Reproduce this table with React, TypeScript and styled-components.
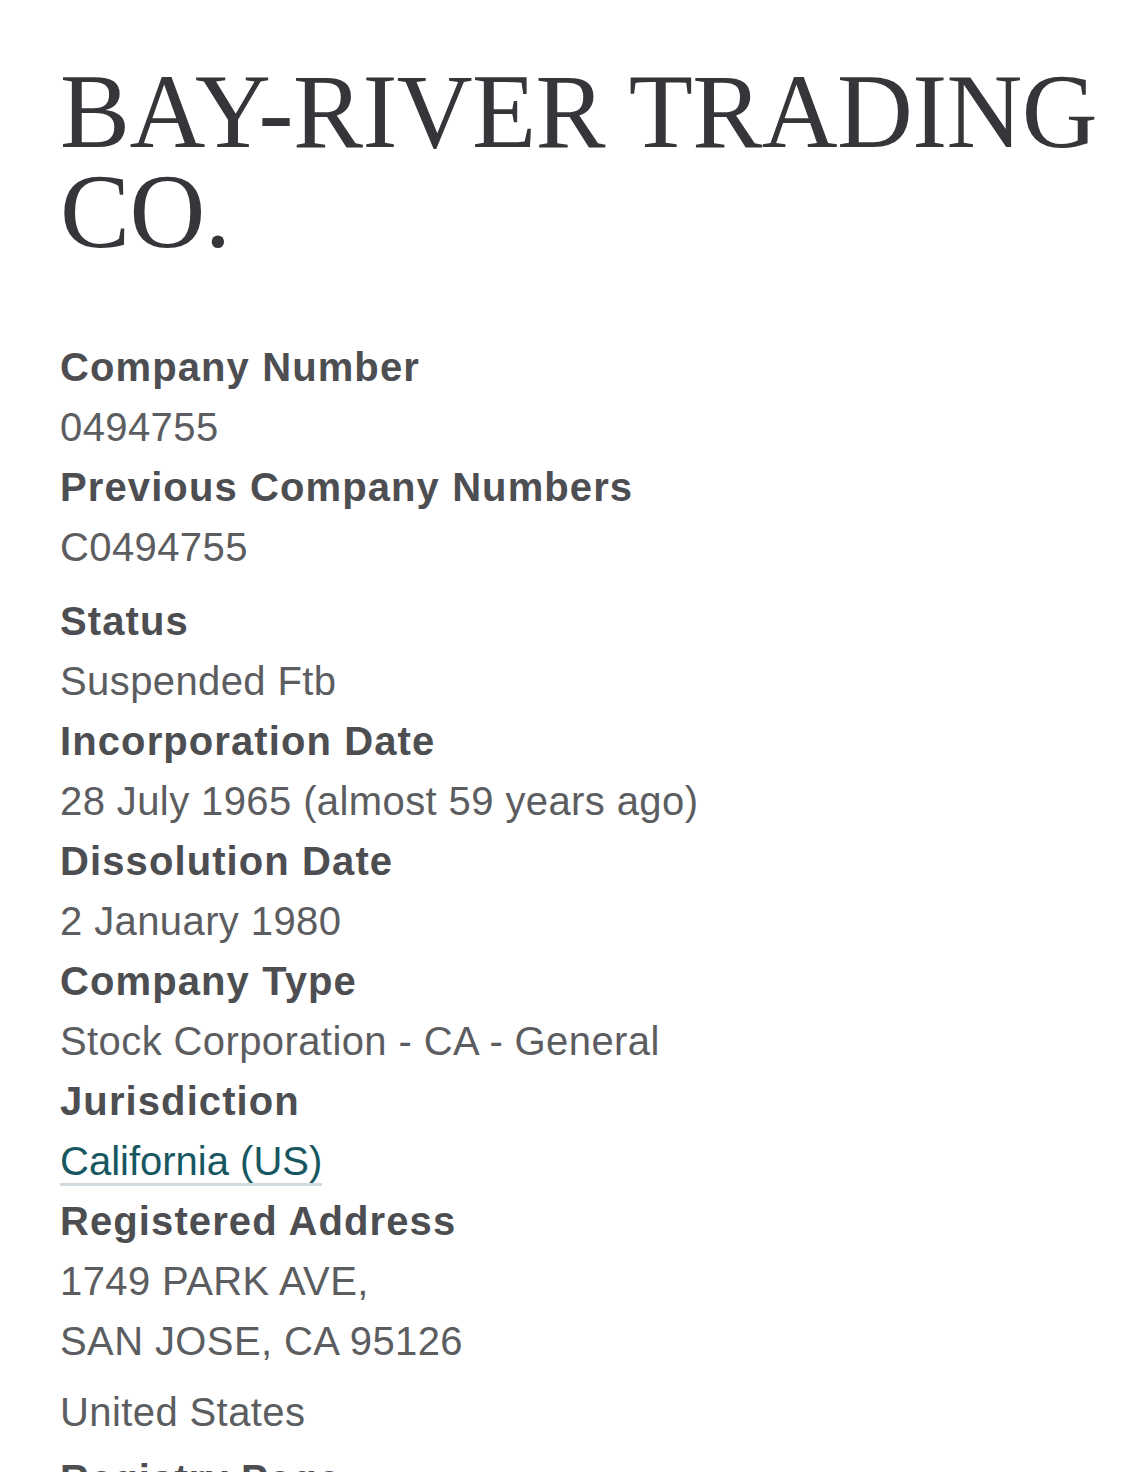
import React from "react";
import styled, { createGlobalStyle } from "styled-components";

const GlobalStyle = createGlobalStyle`
  html, body {
    margin: 0;
    padding: 0;
    background: #ffffff;
  }
  body {
    font-family: "Liberation Sans", Arial, sans-serif;
    -webkit-font-smoothing: antialiased;
  }
`;

const Page = styled.main`
  padding: 62px 20px 0 60px;
  box-sizing: border-box;
  width: 100%;
`;

const Title = styled.h1`
  margin: 0 0 75px;
  font-family: "Liberation Serif", "Times New Roman", serif;
  font-weight: 400;
  font-size: 105px;
  line-height: 100px;
  letter-spacing: -0.6px;
  color: #35363a;
  max-width: 1056px;
`;

const DetailList = styled.dl`
  margin: 0;
  padding: 0;
  font-size: 40px;
  line-height: 60px;
`;

const Label = styled.dt`
  margin: 0;
  font-weight: 700;
  letter-spacing: 1.1px;
  color: #4d4e52;
`;

const Value = styled.dd<{ $after?: number }>`
  margin: 0 0 ${(p) => p.$after ?? 0}px;
  font-weight: 400;
  letter-spacing: 0.4px;
  color: #5c5d61;
`;

const Line = styled.span`
  display: block;
`;

const Country = styled.span`
  display: block;
  margin-top: 11px;
`;

const Link = styled.a`
  color: #17575f;
  text-decoration: none;
  letter-spacing: 0;
  border-bottom: 3px solid #cfdbdf;
`;

export default function App() {
  return (
    <>
      <GlobalStyle />
      <Page>
        <Title>BAY-RIVER TRADING CO.</Title>
        <DetailList>
          <Label>Company Number</Label>
          <Value>0494755</Value>
          <Label>Previous Company Numbers</Label>
          <Value $after={14}>C0494755</Value>
          <Label>Status</Label>
          <Value>Suspended Ftb</Value>
          <Label>Incorporation Date</Label>
          <Value>28 July 1965 (almost 59 years ago)</Value>
          <Label>Dissolution Date</Label>
          <Value>2 January 1980</Value>
          <Label>Company Type</Label>
          <Value>Stock Corporation - CA - General</Value>
          <Label>Jurisdiction</Label>
          <Value>
            <Link href="#">California (US)</Link>
          </Value>
          <Label>Registered Address</Label>
          <Value $after={7}>
            <Line>1749 PARK AVE,</Line>
            <Line>SAN JOSE, CA 95126</Line>
            <Country>United States</Country>
          </Value>
          <Label>Registry Page</Label>
          <Value>
            <Link href="#">https://bizfileonline.sos.ca.gov/search/business</Link>
          </Value>
        </DetailList>
      </Page>
    </>
  );
}
